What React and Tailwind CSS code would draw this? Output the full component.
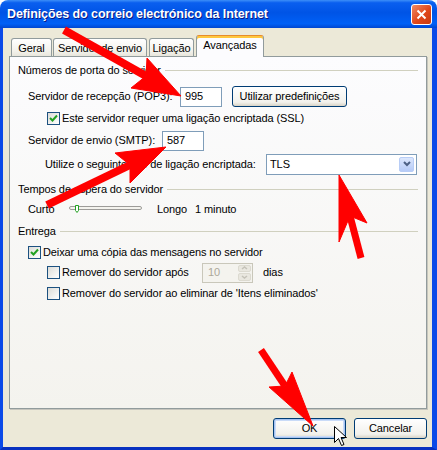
import React from "react";

const Check = ({ checked }) => (
    <span className="relative w-[13px] h-[13px] shrink-0 border border-[#1c5180] bg-[linear-gradient(135deg,#dcdcd7,#ffffff)]">
        {checked && (
            <svg className="absolute left-[1px] top-[1px]" width="9" height="9" viewBox="0 0 9 9">
                <path d="M1 4 L3.5 6.5 L8 1.5" fill="none" stroke="#21a121" strokeWidth="2" />
            </svg>
        )}
    </span>
);

const XpButton = ({ children, className = "", focused }) => (
    <div
        className={`flex items-center justify-center border border-[#003c74] rounded-[3px] bg-[linear-gradient(to_bottom,#ffffff,#f2f1ec_80%,#d8d3c6)] ${
            focused ? "shadow-[inset_0_0_0_1px_#a6c3f1,inset_0_0_0_2px_#c9dbf8]" : ""
        } ${className}`}
    >
        {children}
    </div>
);

const GroupHeader = ({ label }) => (
    <div className="flex items-center h-[16px] gap-[4px]">
        <span>{label}</span>
        <div className="flex-1 h-px bg-[#d0d0bf]" />
    </div>
);

const Tab = ({ label, className = "", active }) =>
    active ? (
        <div
            className={`relative z-10 -mb-px h-[22px] border border-b-0 border-[#919b9c] border-t-[#e68b2c] rounded-t-[3px] bg-[#fcfcfe] shadow-[inset_0_1px_0_#ffc73c,inset_0_2px_0_#ffc73c] flex items-center justify-center pb-[2px] ${className}`}
        >
            {label}
        </div>
    ) : (
        <div
            className={`h-[18px] border border-b-0 border-[#919b9c] rounded-t-[3px] bg-[linear-gradient(to_bottom,#ffffff,#f3f2ec_70%,#e8e6dc)] flex items-center justify-center pt-[1px] ${className}`}
        >
            {label}
        </div>
    );

const Arrows = () => (
    <svg className="absolute inset-0 pointer-events-none" width="437" height="450" viewBox="0 0 437 450">
        <g fill="#ff0000" stroke="#ff0000">
            <line x1="64" y1="30" x2="146" y2="76" strokeWidth="8" />
            <polygon points="181,96 131,88 146,76 147,58" strokeWidth="1" />
            <line x1="47" y1="205" x2="130" y2="165" strokeWidth="8" />
            <polygon points="166,147 130,183 130,165 115,153" strokeWidth="1" />
            <line x1="361" y1="258" x2="350" y2="216" strokeWidth="7" />
            <polygon points="339,175 367,223 350,216 339,242" strokeWidth="1" />
            <line x1="261" y1="350" x2="285" y2="386" strokeWidth="7" />
            <polygon points="313,426 269,387 285,386 292,372" strokeWidth="1" />
        </g>
        <path
            d="M334.5 426.5 L334.5 442.5 L338.5 438.5 L341.5 445.5 L344 444.5 L341 437.5 L346.5 437.5 Z"
            fill="#ffffff"
            stroke="#000000"
            strokeWidth="1"
        />
    </svg>
);

export default function App() {
    return (
        <div className="relative w-[437px] h-[450px] overflow-hidden flex flex-col font-['Liberation_Sans',Arial,sans-serif] text-[11px] text-black tracking-[-0.1px]">
            <div className="h-[28px] shrink-0 rounded-t-[8px] bg-[linear-gradient(to_bottom,#3d8ff8_0%,#0a5fef_10%,#0054e6_45%,#0060f6_85%,#0046d0_100%)] flex items-center pl-[7px] pr-[5px]">
                <span className="flex-1 text-white font-bold text-[12.5px] tracking-[-0.1px] [text-shadow:1px_1px_0_#0a1883]">
                    Definições do correio electrónico da Internet
                </span>
                <div className="w-[21px] h-[21px] rounded-[3px] border border-white bg-[linear-gradient(135deg,#f08a64,#e0471b_55%,#c93a10)] flex items-center justify-center">
                    <svg width="11" height="11" viewBox="0 0 11 11">
                        <path d="M1.5 1.5 L9.5 9.5 M9.5 1.5 L1.5 9.5" stroke="#ffffff" strokeWidth="2" />
                    </svg>
                </div>
            </div>
            <div className="flex-1 flex flex-col bg-[#ece9d8] border-l-[3px] border-r-[5px] border-b-[3px] border-l-[#0b4ae8] border-r-[#0b4ae8] border-b-[#0831c0]">
                <div className="flex items-end pt-[7px] pl-[8px]">
                    <Tab label="Geral" className="w-[41px]" />
                    <Tab label="Servidor de envio" className="w-[94px] ml-[1px]" />
                    <Tab label="Ligação" className="w-[45px] ml-[2px]" />
                    <Tab label="Avançadas" className="w-[68px] ml-[2px]" active />
                </div>
                <div className="ml-[6px] w-[418px] h-[353px] border border-[#919b9c] bg-[linear-gradient(to_bottom,#fcfcfe,#f4f3ee)] shadow-[1px_1px_0_#c6c5bd] px-[8px]">
                    <div className="mt-[5px]">
                        <GroupHeader label="Números de porta do servidor" />
                    </div>
                    <div className="mt-[8px] h-[21px] flex items-center pl-[10px]">
                        <span className="w-[152px]">Servidor de recepção (POP3):</span>
                        <div className="w-[42px] h-[20px] border border-[#7f9db9] bg-white flex items-center pl-[4px]">995</div>
                        <XpButton className="ml-[10px] w-[115px] h-[21px]">Utilizar predefinições</XpButton>
                    </div>
                    <div className="mt-[4px] h-[14px] flex items-center pl-[29px]">
                        <Check checked />
                        <span className="ml-[2px]">Este servidor requer uma ligação encriptada (SSL)</span>
                    </div>
                    <div className="mt-[5px] h-[21px] flex items-center pl-[10px]">
                        <span className="w-[134px]">Servidor de envio (SMTP):</span>
                        <div className="w-[42px] h-[20px] border border-[#7f9db9] bg-white flex items-center pl-[4px]">587</div>
                    </div>
                    <div className="mt-[2px] h-[22px] flex items-center pl-[27px]">
                        <span className="w-[221px]">Utilize o seguinte tipo de ligação encriptada:</span>
                        <div className="w-[151px] h-[21px] border border-[#7f9db9] bg-white flex items-center pl-[3px] pr-[2px]">
                            <span className="flex-1">TLS</span>
                            <div className="w-[15px] h-[15px] rounded-[2px] border border-[#b8cdf6] bg-[linear-gradient(to_bottom,#dce7fd,#b6cbf7)] flex items-center justify-center">
                                <svg width="8" height="6" viewBox="0 0 8 6">
                                    <path d="M1 1 L4 4 L7 1" fill="none" stroke="#4d6185" strokeWidth="2" />
                                </svg>
                            </div>
                        </div>
                    </div>
                    <div className="mt-[6px]">
                        <GroupHeader label="Tempos de espera do servidor" />
                    </div>
                    <div className="mt-[3px] h-[18px] flex items-center pl-[10px]">
                        <span className="w-[41px]">Curto</span>
                        <svg width="73" height="12" viewBox="0 0 73 12">
                            <rect x="0.5" y="3.5" width="72" height="3" rx="1.5" fill="#f4f3ee" stroke="#9d9c99" />
                            <path d="M6.5 2.5 L9.5 2.5 L9.5 7.5 L8 9.5 L6.5 7.5 Z" fill="#ffffff" stroke="#21a121" />
                        </svg>
                        <span className="ml-[15px] w-[38px]">Longo</span>
                        <span>1 minuto</span>
                    </div>
                    <div className="mt-[5px]">
                        <GroupHeader label="Entrega" />
                    </div>
                    <div className="mt-[6px] h-[14px] flex items-center pl-[10px]">
                        <Check checked />
                        <span className="ml-[2px]">Deixar uma cópia das mensagens no servidor</span>
                    </div>
                    <div className="mt-[3px] h-[21px] flex items-center pl-[29px]">
                        <Check />
                        <span className="ml-[2px] w-[140px]">Remover do servidor após</span>
                        <div className="w-[51px] h-[20px] border border-[#c9c7ba] bg-[#f4f3ee] flex items-center pl-[5px] pr-[1px] text-[#aca899]">
                            <span className="flex-1">10</span>
                            <div className="w-[13px] h-[16px] flex flex-col gap-px">
                                <div className="flex-1 rounded-[2px] bg-[#e9e7df] border border-[#dcdad0] flex items-center justify-center">
                                    <svg width="7" height="4" viewBox="0 0 7 4">
                                        <path d="M1 3 L3.5 1 L6 3" fill="none" stroke="#c4c2b8" strokeWidth="1.5" />
                                    </svg>
                                </div>
                                <div className="flex-1 rounded-[2px] bg-[#e9e7df] border border-[#dcdad0] flex items-center justify-center">
                                    <svg width="7" height="4" viewBox="0 0 7 4">
                                        <path d="M1 1 L3.5 3 L6 1" fill="none" stroke="#c4c2b8" strokeWidth="1.5" />
                                    </svg>
                                </div>
                            </div>
                        </div>
                        <span className="ml-[10px]">dias</span>
                    </div>
                    <div className="mt-[3px] h-[14px] flex items-center pl-[29px]">
                        <Check />
                        <span className="ml-[2px]">Remover do servidor ao eliminar de 'Itens eliminados'</span>
                    </div>
                </div>
                <div className="mt-[9px] flex justify-end gap-[8px] pr-[5px]">
                    <XpButton className="w-[73px] h-[21px]" focused>OK</XpButton>
                    <XpButton className="w-[73px] h-[21px]">Cancelar</XpButton>
                </div>
            </div>
            <Arrows />
        </div>
    );
}
